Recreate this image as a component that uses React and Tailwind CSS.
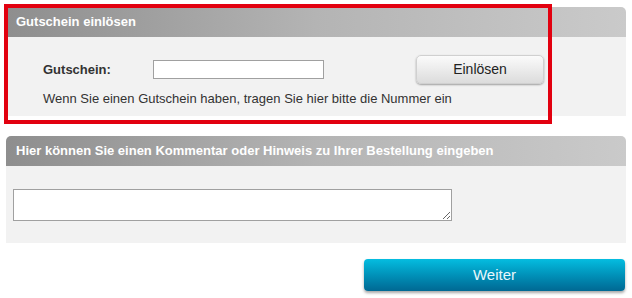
import React, { useState } from 'react';

const Panel = ({ title, children, className = '' }) => (
  <div className={`rounded-t-[5px] overflow-hidden ${className}`}>
    <div className="h-[30px] flex items-center pl-[10px] bg-gradient-to-r from-[#8e8e8e] via-[#b4b4b4] to-[#cacaca] text-white font-bold text-[13px]">
      {title}
    </div>
    {children}
  </div>
);

const App = () => {
  const [code, setCode] = useState('');
  const [comment, setComment] = useState('');

  return (
    <div className="relative w-[632px] h-[298px] bg-white font-['Liberation_Sans',Arial,sans-serif] text-[#333]">
      <div className="pl-[6px] pt-[7px] w-[626px]">
        <Panel title="Gutschein einlösen">
          <div className="bg-[#f2f2f2] h-[79px] pt-[18px] pl-[37px]">
            <div className="flex items-center h-[29px]">
              <label className="w-[110px] font-bold text-[13px]">Gutschein:</label>
              <input
                value={code}
                onChange={(e) => setCode(e.target.value)}
                className="w-[171px] h-[19px] bg-white border border-[#a0a0a0] outline-none text-[13px] px-1"
              />
              <button className="ml-[92px] w-[128px] h-[29px] rounded-[5px] border border-[#d0d0d0] bg-gradient-to-b from-[#fbfbfb] to-[#dcdcdc] shadow-[0_1px_2px_rgba(0,0,0,0.35)] text-[14px] text-[#222]">
                Einlösen
              </button>
            </div>
            <p className="mt-[7px] text-[13px] leading-[16px]">
              Wenn Sie einen Gutschein haben, tragen Sie hier bitte die Nummer ein
            </p>
          </div>
        </Panel>

        <Panel title="Hier können Sie einen Kommentar oder Hinweis zu Ihrer Bestellung eingeben" className="mt-[20px]">
          <div className="bg-[#f2f2f2] h-[77px] pt-[23px] pl-[7px]">
            <textarea
              value={comment}
              onChange={(e) => setComment(e.target.value)}
              className="block w-[439px] h-[32px] bg-white border border-[#a0a0a0] outline-none text-[13px]"
            />
          </div>
        </Panel>

        <div className="flex justify-end mt-[16px] pr-[1px]">
          <button className="w-[261px] h-[32px] rounded-[4px] bg-gradient-to-b from-[#05bde0] to-[#006893] shadow-[0_2px_3px_rgba(0,0,0,0.35)] text-[#e8f8fc] text-[15px]">
            Weiter
          </button>
        </div>
      </div>

      <div className="absolute left-[4px] top-[4px] w-[548px] h-[120px] border-[4px] border-[#e2000f] pointer-events-none" />
    </div>
  );
};

export default App;
